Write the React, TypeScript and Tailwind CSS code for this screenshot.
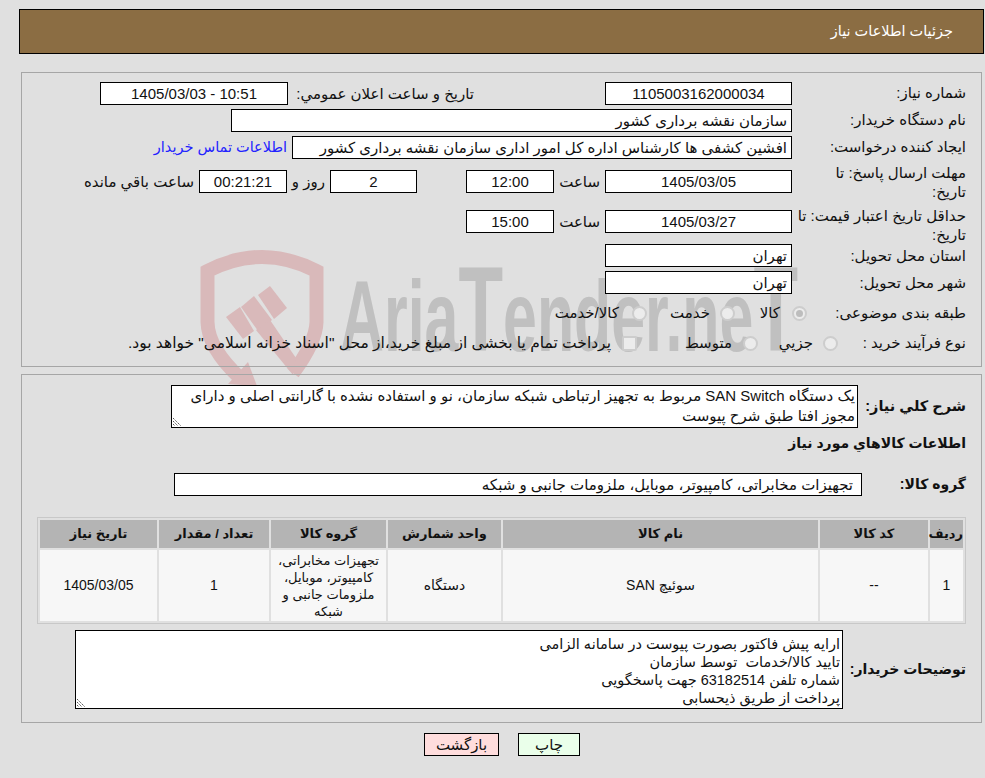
const labelCls = "w-[174px] shrink-0 leading-[21px]";
const tallLabelCls = "w-[174px] shrink-0 leading-[19px]";
const boxCls = "h-[23px] shrink-0 border border-black bg-white text-center leading-[21px]";
const inputRight = "h-[23px] shrink-0 border border-black bg-white px-1 text-right leading-[21px] whitespace-nowrap overflow-hidden";

function Grip() {
  return (
    <svg className="absolute bottom-0 left-0" width="10" height="10" viewBox="0 0 10 10">
      <path d="M1 1 L9 9 M1 4 L6 9 M1 7 L3 9" stroke="#555" strokeWidth="1" strokeDasharray="1.5 0.8" fill="none" />
    </svg>
  );
}

function Radio({ checked }: { checked?: boolean }) {
  return (
    <span className="flex size-[15px] shrink-0 items-center justify-center rounded-full border-2 border-[#cdcdcd] bg-[#ececec]">
      {checked && <span className="size-[7px] rounded-full bg-[#bdbdbd]" />}
    </span>
  );
}

function Watermark() {
  return (
    <svg dir="ltr" className="absolute left-0 top-0" width="985" height="778" viewBox="0 0 985 778">
      <g fill="#d9b9ba">
        <path d="M293 373 Q316 342 316.5 322 L316.5 271 Q262 243 207.5 271 L207.5 322 Q208 348 240 378" fill="none" stroke="#d9b9ba" strokeWidth="14" />
        <path d="M248 362 L257 386 L228 384 Z" />
        <path d="M258 295 L270 286 L287 308 L274 319 Z" />
        <path d="M241 307 L254 296 L272 320 L258 331 Z" />
        <path d="M226 317 L240 307 L254 331 L243 339 Z" />
        <path d="M256 330 L270 320 L296 358 L293 375 Z" />
      </g>
      <text
        x="340"
        y="351"
        direction="ltr"
        fontFamily="Liberation Sans"
        fontWeight="700"
        fontSize="100"
        fill="#c0c0c0"
        textLength="458"
        lengthAdjust="spacingAndGlyphs"
      >
        Aria<tspan fontSize="120">T</tspan>ender.ne<tspan fontSize="120">T</tspan>
      </text>
    </svg>
  );
}

export default function App() {
  const columns = [
    { title: "ردیف", value: "1", w: "w-[33px]" },
    { title: "کد کالا", value: "--", w: "w-[108px]" },
    { title: "نام کالا", value: "سوئیچ SAN", w: "w-[315px]" },
    { title: "واحد شمارش", value: "دستگاه", w: "w-[113px]" },
    { title: "گروه کالا", value: "تجهیزات مخابراتی، کامپیوتر، موبایل، ملزومات جانبی و شبکه", w: "w-[115px]" },
    { title: "تعداد / مقدار", value: "1", w: "w-[110px]" },
    { title: "تاریخ نیاز", value: "1405/03/05", w: "w-[117px]" },
  ];

  return (
    <div
      dir="rtl"
      className="relative h-[778px] w-[985px] overflow-hidden bg-[#e0e0e0] font-['Liberation_Sans','DejaVu_Sans',sans-serif] text-[15px] text-[#111]"
    >
      <Watermark />
      <div className="relative pl-[19px] pr-px pt-[9px]">
        <div className="flex h-[45px] items-center border border-black bg-[#8b6d43] pr-[30px] text-[14.5px] text-white">
          جزئیات اطلاعات نیاز
        </div>

        {/* main info */}
        <div className="ml-[2px] mr-[2px] mt-[18px] h-[295px] border border-[#a6a6a6] pr-[15px] pt-[9px]">
          <div className="flex items-start">
            <div className={labelCls}>شماره نیاز:</div>
            <div className={`${boxCls} w-[187px]`}>1105003162000034</div>
            <div className="mr-[131px] w-[186px] shrink-0 leading-[23px]">تاریخ و ساعت اعلان عمومي:</div>
            <div className={`${boxCls} w-[188px]`}>10:51 - 1405/03/03</div>
          </div>
          <div className="mt-[4px] flex items-start">
            <div className={labelCls}>نام دستگاه خریدار:</div>
            <div className={`${inputRight} w-[561px]`}>سازمان نقشه برداری کشور</div>
          </div>
          <div className="mt-[4px] flex items-start">
            <div className={labelCls}>ایجاد کننده درخواست:</div>
            <div className={`${inputRight} w-[500px]`}>افشین کشفی ها کارشناس اداره کل امور اداری سازمان نقشه برداری کشور</div>
            <div className="mr-[5px] whitespace-nowrap text-[14.5px] leading-[23px] text-[#2222ff]">اطلاعات تماس خریدار</div>
          </div>
          <div className="mt-[4px] flex items-start">
            <div className={tallLabelCls}>
              مهلت ارسال پاسخ: تا
              <br />
              تاریخ:
            </div>
            <div className={`${boxCls} mt-[7px] w-[187px]`}>1405/03/05</div>
            <div className="mr-[5px] mt-[7px] w-[46px] shrink-0 leading-[23px]">ساعت</div>
            <div className={`${boxCls} mt-[7px] w-[88px]`}>12:00</div>
            <div className={`${boxCls} mr-[49px] mt-[7px] w-[87px]`}>2</div>
            <div className="mr-[5px] mt-[7px] w-[38px] shrink-0 leading-[23px]">روز و</div>
            <div className={`${boxCls} mt-[7px] w-[88px] bg-[#fffff0]`}>00:21:21</div>
            <div className="mr-[5px] mt-[7px] shrink-0 whitespace-nowrap leading-[23px]">ساعت باقي مانده</div>
          </div>
          <div className="mt-[5px] flex items-start">
            <div className={tallLabelCls}>
              حداقل تاریخ اعتبار قیمت: تا
              <br />
              تاریخ:
            </div>
            <div className={`${boxCls} mt-[4px] w-[187px]`}>1405/03/27</div>
            <div className="mr-[5px] mt-[4px] w-[46px] shrink-0 leading-[23px]">ساعت</div>
            <div className={`${boxCls} mt-[4px] w-[88px]`}>15:00</div>
          </div>
          <div className="flex items-start">
            <div className={`${labelCls} leading-[23px]`}>استان محل تحویل:</div>
            <div className={`${inputRight} w-[187px]`}>تهران</div>
          </div>
          <div className="mt-[4px] flex items-start">
            <div className={`${labelCls} leading-[23px]`}>شهر محل تحویل:</div>
            <div className={`${inputRight} w-[187px]`}>تهران</div>
          </div>
          <div className="mt-[8px] flex h-[22px] items-center">
            <div className="w-[159px] shrink-0">طبقه بندی موضوعی:</div>
            <Radio checked />
            <span className="mr-[12px] w-[33px]">کالا</span>
            <span className="mr-[12px]"><Radio /></span>
            <span className="mr-[10px] w-[50px]">خدمت</span>
            <span className="mr-[13px]"><Radio /></span>
            <span className="mr-[13px]">کالا/خدمت</span>
          </div>
          <div className="mt-[8px] flex h-[22px] items-center">
            <div className="w-[128px] shrink-0">نوع فرآیند خرید :</div>
            <Radio />
            <span className="mr-[10px] w-[45px]">جزيي</span>
            <span className="mr-[10px]"><Radio /></span>
            <span className="mr-[11px] w-[44px]">متوسط</span>
            <span className="mr-[51px] size-[15px] rounded-[2px] border-2 border-[#cdcdcd] bg-[#ececec]" />
            <span className="mr-[11px] whitespace-nowrap text-[15.5px]">پرداخت تمام یا بخشی از مبلغ خرید،از محل "اسناد خزانه اسلامی" خواهد بود.</span>
          </div>
        </div>

        {/* goods */}
        <div className="ml-[2px] mr-[2px] mt-[7px] h-[349px] border border-[#a6a6a6] pr-[15px] pt-[10px]">
          <div className="flex items-center">
            <div className="w-[108px] shrink-0 text-[14.5px] font-bold">شرح کلي نياز:</div>
            <div className="relative h-[43px] w-[687px] border border-black bg-white pr-[2px] text-right leading-[20px]">
              یک دستگاه SAN Switch مربوط به تجهیز ارتباطی شبکه سازمان، نو و استفاده نشده با گارانتی اصلی و دارای
              <br />
              مجوز افتا طبق شرح پیوست
              <Grip />
            </div>
          </div>
          <div className="mt-[5px] h-[20px] text-[14px] font-bold leading-[20px]">اطلاعات کالاهاي مورد نياز</div>
          <div className="mt-[20px] flex items-center">
            <div className="w-[104px] shrink-0 text-[14px] font-bold">گروه کالا:</div>
            <div className={`${inputRight} w-[688px] pr-[8px]`}>تجهیزات مخابراتی، کامپیوتر، موبایل، ملزومات جانبی و شبکه</div>
          </div>

          <table className="mt-[21px] w-[928px] table-fixed border-separate border-spacing-[2px] border border-[#c8c8c8] text-[14px]">
            <thead>
              <tr>
                {columns.map((col) => (
                  <th key={col.title} className={`${col.w} h-[28px] bg-[#b4b4b4] p-0 text-center text-[13px] font-bold`}>
                    {col.title}
                  </th>
                ))}
              </tr>
            </thead>
            <tbody>
              <tr>
                {columns.map((col) => (
                  <td
                    key={col.title}
                    className={`h-[71px] bg-[#f7f7f7] px-[2px] py-0 text-center leading-[17px] ${col.title === "گروه کالا" ? "text-[13px]" : ""}`}
                  >
                    {col.value}
                  </td>
                ))}
              </tr>
            </tbody>
          </table>

          <div className="mt-[6px] flex items-center">
            <div className="w-[123px] shrink-0 whitespace-nowrap text-[14px] font-bold">توضیحات خریدار:</div>
            <div className="relative h-[79px] w-[768px] border border-black bg-white pr-[2px] pt-[4px] text-right text-[14.5px] leading-[18px]">
              ارایه پیش فاکتور بصورت پیوست در سامانه الزامی
              <br />
              تایید کالا/خدمات{"\u00a0"} توسط سازمان
              <br />
              شماره تلفن 63182514 جهت پاسخگویی
              <br />
              پرداخت از طریق ذیحسابی
              <Grip />
            </div>
          </div>
        </div>

        <div className="mt-[10px] flex justify-center gap-[19px] pl-px">
          <button className="h-[23px] w-[62px] border border-black bg-[#eaffea] text-[15px] leading-[21px]">چاپ</button>
          <button className="h-[23px] w-[75px] border border-black bg-[#ffdddd] text-[15px] leading-[21px]">بازگشت</button>
        </div>
      </div>
    </div>
  );
}
